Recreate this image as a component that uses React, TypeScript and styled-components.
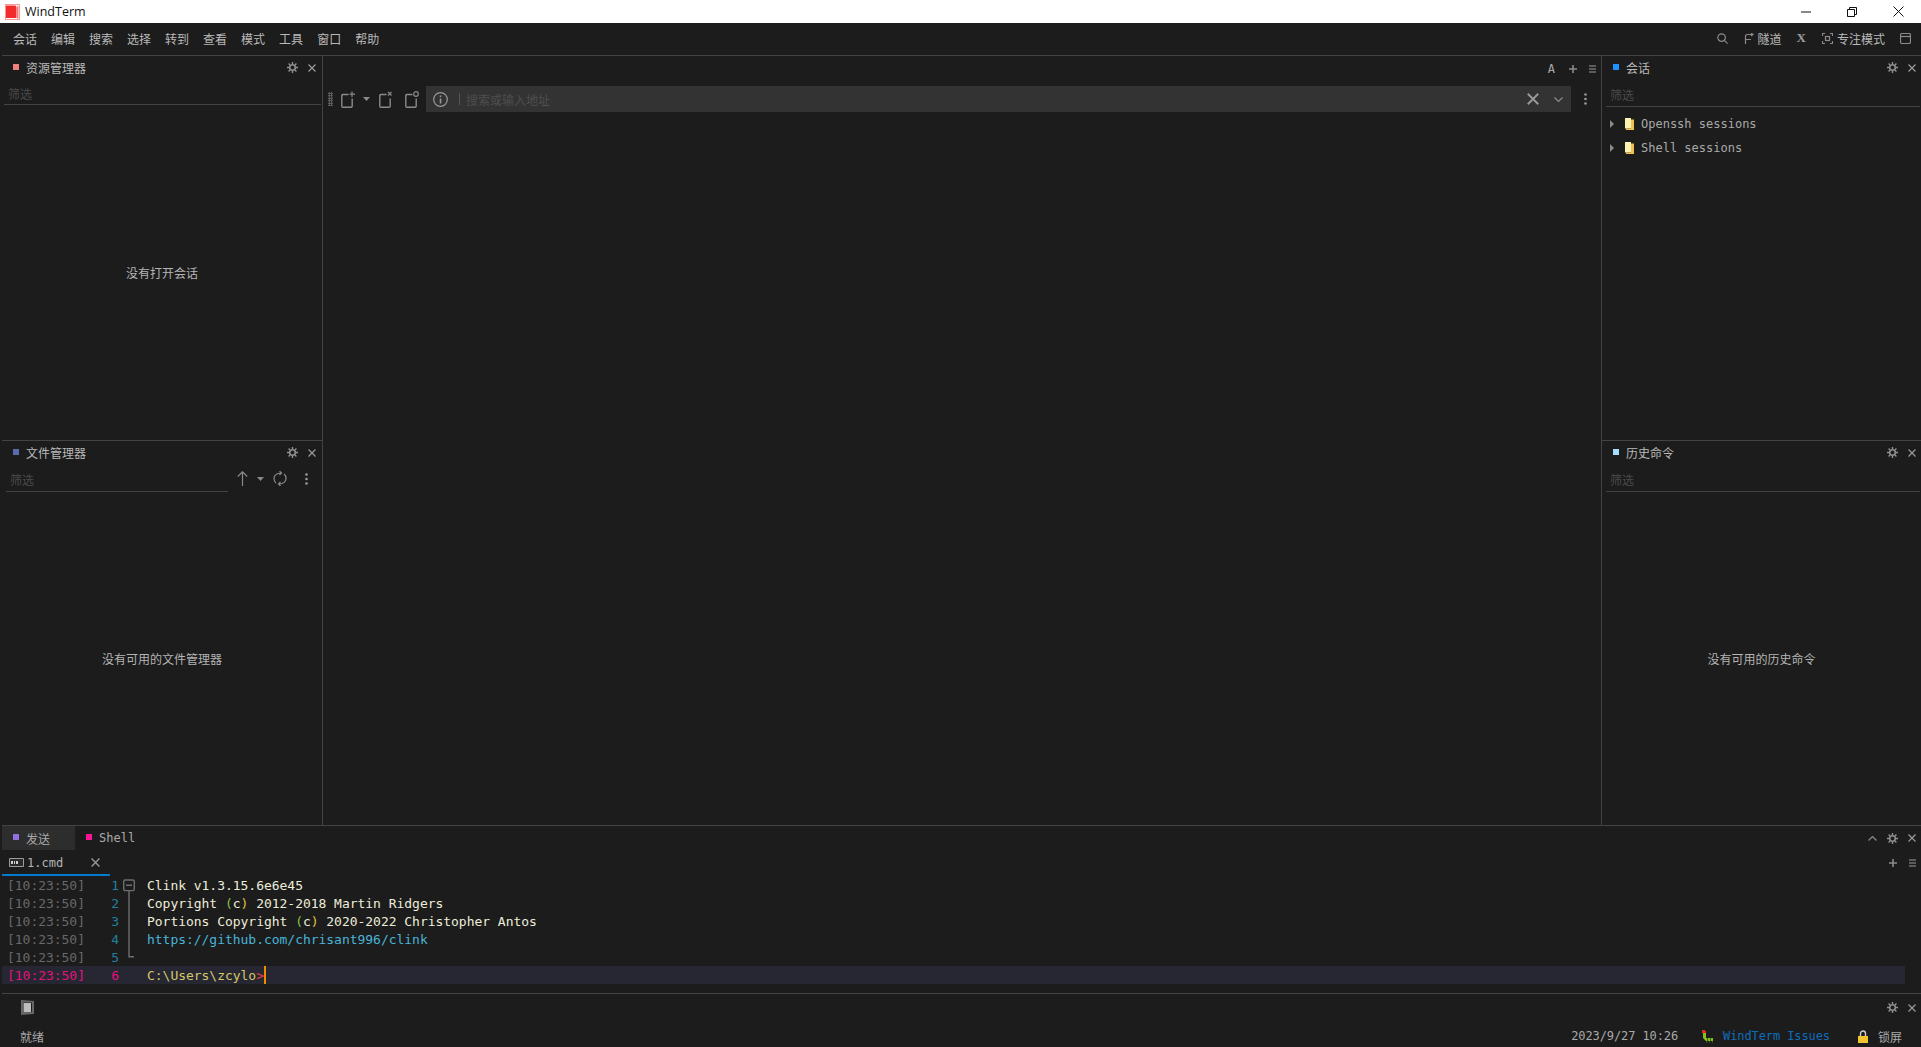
import styled, { createGlobalStyle } from "styled-components";

const GlobalStyle = createGlobalStyle`
  html, body {
    margin: 0;
    padding: 0;
    height: 100%;
    background: #1c1c1c;
    overflow: hidden;
  }
  #root {
    height: 100%;
  }
  * {
    box-sizing: border-box;
  }
`;

const uiFont = `"Noto Sans CJK SC", "Noto Sans", sans-serif`;
const monoFont = `"DejaVu Sans Mono", "Liberation Mono", monospace`;
const line = "#434343";

const Page = styled.div`
  width: 1921px;
  height: 1047px;
  display: flex;
  flex-direction: column;
  background: #1c1c1c;
  color: #b4b4b4;
  font-family: ${uiFont};
  font-size: 12px;
`;

const TitleBar = styled.div`
  height: 23px;
  flex: none;
  background: #fff;
  display: flex;
  align-items: center;
  padding-left: 5px;
  color: #111;
  font-family: "Open Sans", "Noto Sans", sans-serif;
  font-size: 12.5px;
`;

const AppName = styled.span`
  margin-left: 5px;
  flex: 1;
`;

const WinButton = styled.div`
  width: 46px;
  height: 23px;
  display: flex;
  align-items: center;
  justify-content: center;
`;

const Body = styled.div`
  flex: 1;
  display: flex;
  flex-direction: column;
  padding-left: 2px;
  background: #1c1c1c;
  min-height: 0;
`;

const Gap = styled.span<{ $w: number }>`
  flex: none;
  width: ${(p) => p.$w}px;
`;

const MenuBar = styled.div`
  height: 33px;
  flex: none;
  display: flex;
  align-items: center;
  padding: 0 10px 2px 11px;
  border-bottom: 1px solid ${line};
`;

const MenuItem = styled.span`
  margin-right: 14px;
  color: #b9b9b9;
`;

const MenuSpacer = styled.div`
  flex: 1;
`;

const MenuAction = styled.div<{ $gap: number }>`
  display: flex;
  align-items: center;
  gap: 4px;
  margin-right: ${(p) => p.$gap}px;
  color: #b9b9b9;
`;

const XGlyph = styled.span`
  font-family: "Liberation Serif", serif;
  font-weight: 700;
  font-size: 13px;
  color: #9c9c9c;
  margin-right: 1px;
`;

const Workspace = styled.div`
  height: 769px;
  flex: none;
  display: grid;
  grid-template-columns: 321px 1279px 1fr;
`;

const Column = styled.div<{ $side: "left" | "right" }>`
  display: grid;
  grid-template-rows: 385px 384px;
  ${(p) => (p.$side === "left" ? `border-right: 1px solid ${line};` : "")}
  min-height: 0;
`;

const Center = styled.div`
  display: flex;
  flex-direction: column;
  border-right: 1px solid ${line};
`;

const Panel = styled.section<{ $divided?: boolean }>`
  display: flex;
  flex-direction: column;
  min-height: 0;
  ${(p) => (p.$divided ? `border-bottom: 1px solid ${line};` : "")}
`;

const PanelHeader = styled.div<{ $right?: number }>`
  height: 24px;
  flex: none;
  display: flex;
  align-items: center;
  padding: 0 ${(p) => p.$right ?? 5}px 1px 11px;
`;

const Marker = styled.i<{ $color: string }>`
  width: 6px;
  height: 6px;
  flex: none;
  margin-right: 7px;
  margin-top: -2px;
  background: ${(p) => p.$color};
`;

const PanelTitle = styled.span`
  flex: 1;
  color: #b9b9b9;
`;

const HeaderIcons = styled.div`
  display: flex;
  align-items: center;
  gap: 10px;
`;

const SessionIcons = styled(HeaderIcons)`
  gap: 12px;
`;

const FilterRow = styled.div<{ $indent: number; $tall?: boolean; $width?: number }>`
  height: ${(p) => (p.$tall ? 27 : 25)}px;
  flex: none;
  ${(p) => (p.$width ? `width: ${p.$width}px;` : "")}
  display: flex;
  align-items: center;
  margin: 0 1px 0 ${(p) => p.$indent}px;
  border-bottom: 1px solid ${line};
  padding: 2px 0 0 4px;
  color: #4a4a4a;
`;

const FileFilterBar = styled.div`
  display: flex;
  flex: none;
  align-items: center;
  height: 27px;
`;

const FileTools = styled.div`
  display: flex;
  align-items: center;
  margin-left: 8px;
`;

const Empty = styled.div`
  flex: 1;
  display: flex;
  align-items: center;
  justify-content: center;
  color: #b4b4b4;
`;

const Tree = styled.div`
  padding-top: 5px;
`;

const TreeRow = styled.div`
  height: 24px;
  display: flex;
  align-items: center;
  padding-left: 8px;
  color: #a9a9a9;
  font-family: ${monoFont};
`;

const CenterTop = styled.div`
  height: 30px;
  flex: none;
  display: flex;
  align-items: center;
  justify-content: flex-end;
  gap: 12px;
  padding: 0 5px 4px 0;
  color: #a8a8a8;
`;

const FontGlyph = styled.span`
  font-family: ${monoFont};
  font-size: 12px;
  margin-right: 2px;
  color: #a8a8a8;
`;

const Toolbar = styled.div`
  height: 26px;
  flex: none;
  display: flex;
  align-items: center;
  padding-left: 5px;
`;

const Grip = styled.div`
  width: 5px;
  height: 14px;
  margin-right: 8px;
  background-image: radial-gradient(#6a6a6a 60%, transparent 65%);
  background-size: 2.5px 2.5px;
`;

const AddressBox = styled.div`
  width: 1145px;
  height: 26px;
  margin-left: 7px;
  display: flex;
  align-items: center;
  background: #333333;
  padding-left: 7px;
`;

const AddressSep = styled.i`
  width: 1px;
  height: 12px;
  margin: 0 6px 0 11px;
  background: #555;
`;

const AddressText = styled.span`
  flex: 1;
  color: #4e4e4e;
`;

const Dock = styled.div`
  flex: 1;
  display: flex;
  flex-direction: column;
  border-top: 1px solid ${line};
  min-height: 0;
`;

const DockTabs = styled.div`
  height: 24px;
  flex: none;
  display: flex;
  align-items: stretch;
  padding-right: 5px;
`;

const DockTab = styled.div<{ $active?: boolean; $mono?: boolean }>`
  display: flex;
  align-items: center;
  width: 73px;
  padding-left: 11px;
  background: ${(p) => (p.$active ? "#2d2d2d" : "transparent")};
  color: #a9a9a9;
  ${(p) => (p.$mono ? `font-family: ${monoFont};` : "")}
`;

const TabsFill = styled.div`
  flex: 1;
`;

const SessionTabs = styled.div`
  height: 26px;
  flex: none;
  display: flex;
  align-items: center;
  padding-right: 5px;
`;

const SessionTab = styled.div`
  width: 108px;
  height: 26px;
  display: flex;
  align-items: center;
  padding: 1px 10px 0 7px;
  border-bottom: 2px solid #007acc;
  color: #b4b4b4;
  font-family: ${monoFont};
`;

const SessionName = styled.span`
  flex: 1;
  margin-left: 3px;
`;

const Terminal = styled.div`
  height: 117px;
  flex: none;
  padding-right: 16px;
  font-family: ${monoFont};
  font-size: 13px;
  letter-spacing: -0.03px;
`;

const TermLine = styled.div<{ $current?: boolean }>`
  height: 18px;
  display: flex;
  align-items: center;
  white-space: pre;
  background: ${(p) => (p.$current ? "#272733" : "transparent")};
`;

const Stamp = styled.span<{ $current?: boolean }>`
  width: 78px;
  margin-left: 5px;
  color: ${(p) => (p.$current ? "#e3127c" : "#686868")};
`;

const LineNo = styled.span<{ $current?: boolean }>`
  width: 34px;
  text-align: right;
  color: ${(p) => (p.$current ? "#e3127c" : "#22809f")};
`;

const FoldCell = styled.span`
  width: 28px;
  height: 18px;
  padding-left: 4px;
  display: block;
`;

const Code = styled.span<{ $color: string }>`
  color: ${(p) => p.$color};
`;

const Caret = styled.i`
  width: 2px;
  height: 18px;
  background: #f08c00;
`;

const Footer = styled.div`
  flex: 1;
  display: flex;
  flex-direction: column;
  border-top: 1px solid ${line};
`;

const FooterTools = styled.div`
  height: 27px;
  flex: none;
  display: flex;
  align-items: center;
  justify-content: space-between;
  padding: 0 5px 0 19px;
`;

const StatusBar = styled.div`
  flex: 1;
  display: flex;
  align-items: center;
  padding: 4px 19px 0 18px;
  color: #a9a9a9;
`;

const StatusText = styled.span`
  flex: 1;
  color: #a9a9a9;
`;

const StatusClock = styled.span`
  font-family: ${monoFont};
  letter-spacing: -0.1px;
  color: #a9a9a9;
  margin-right: 23px;
`;

const IssuesLink = styled.span`
  margin: 0 28px 0 9px;
  font-family: ${monoFont};
  letter-spacing: -0.1px;
  color: #0f6cbd;
`;

const LockLabel = styled.span`
  margin-left: 10px;
`;

const Stroke = styled.svg<{ $color?: string; $width?: number }>`
  flex: none;
  display: block;
  fill: none;
  stroke: ${(p) => p.$color || "#8a8a8a"};
  stroke-width: ${(p) => p.$width || 1.2};
`;

const TreeTri = styled.svg`
  flex: none;
  fill: #8a8a8a;
  margin-right: 11px;
`;

const TreeFolder = styled.svg`
  flex: none;
  margin-right: 7px;
`;

function Gear() {
  return (
    <Stroke width="11" height="11" viewBox="0 0 11 11" $color="#8f8f8f">
      <circle cx="5.5" cy="5.5" r="2.8" strokeWidth="1.6" />
      <path d="M5.5 0v2M5.5 9v2M0 5.5h2M9 5.5h2M1.6 1.6l1.4 1.4M8 8l1.4 1.4M9.4 1.6L8 3M3 8L1.6 9.4" strokeWidth="1.4" />
    </Stroke>
  );
}

function Close({ size = 8 }: { size?: number }) {
  return (
    <Stroke width={size} height={size} viewBox="0 0 8 8" $color="#9a9a9a">
      <path d="M0.5 0.5l7 7M7.5 0.5l-7 7" />
    </Stroke>
  );
}

function Plus() {
  return (
    <Stroke width="8" height="8" viewBox="0 0 8 8" $color="#8a8a8a">
      <path d="M4 0v8M0 4h8" strokeWidth="1.6" />
    </Stroke>
  );
}

function Lines() {
  return (
    <Stroke width="7" height="8" viewBox="0 0 7 8" $color="#9a9a9a">
      <path d="M0 1h7M0 4h7M0 7h7" strokeWidth="1.1" />
    </Stroke>
  );
}

function Dots() {
  return (
    <svg width="3" height="12" viewBox="0 0 3 12" fill="#9a9a9a">
      <circle cx="1.5" cy="1.5" r="1.3" />
      <circle cx="1.5" cy="6" r="1.3" />
      <circle cx="1.5" cy="10.5" r="1.3" />
    </svg>
  );
}

function DropCaret() {
  return (
    <svg width="7" height="4" viewBox="0 0 7 4" fill="#8a8a8a">
      <path d="M0 0h7L3.5 4z" />
    </svg>
  );
}

function Session({ mark }: { mark: "plus" | "x" | "o" }) {
  return (
    <Stroke width="14" height="17" viewBox="0 0 14 17" $color="#8a8a8a" $width={1.4}>
      <path d="M7.5 3.500H2Q0.800 3.500 0.800 4.700V15q0 1.200 1.200 1.200h8q1.200 0 1.200-1.200V7.500" />
      {mark === "plus" && <path d="M11 0.500v5.500M8.500 3.200h5.500" strokeWidth="1.2" />}
      {mark === "x" && <path d="M9 1l3.500 3.500M12.500 1L9 4.500" strokeWidth="1.2" />}
      {mark === "o" && <circle cx="11" cy="3" r="2.300" strokeWidth="1.2" />}
    </Stroke>
  );
}

function Fold({ kind }: { kind: "box" | "bar" | "end" }) {
  return (
    <Stroke width="12" height="18" viewBox="0 0 12 18" $color="#6e6e6e" $width={1.4}>
      {kind === "box" && (
        <>
          <rect x="0.7" y="4" width="10.600" height="10.600" rx="1.500" />
          <path d="M3 9.300h6M6 14.600v3.400" />
        </>
      )}
      {kind === "bar" && <path d="M6 0v18" />}
      {kind === "end" && <path d="M6 0v8.700h5" />}
    </Stroke>
  );
}

function Folder() {
  return (
    <TreeFolder width="9" height="12" viewBox="0 0 9 12">
      <path d="M0 0h6v10.500H0z" fill="#fff3b4" />
      <path d="M6 1.500h3V12H1v-1.500h5z" fill="#efc04e" />
    </TreeFolder>
  );
}

function Tri() {
  return (
    <TreeTri width="4" height="8" viewBox="0 0 4 8">
      <path d="M0 0l4 4-4 4z" />
    </TreeTri>
  );
}

const menus = ["会话", "编辑", "搜索", "选择", "转到", "查看", "模式", "工具", "窗口", "帮助"];

const stamp = "[10:23:50]";

export default function App() {
  return (
    <Page>
      <GlobalStyle />
      <TitleBar>
        <svg width="15" height="16" viewBox="0 0 15 16">
          <path d="M0 0h15v16H0z" fill="#f59a96" />
          <path d="M1 1h13v14H1z" fill="#fff" />
          <path d="M1 1.500h9.500l1 1.500v11H1z" fill="#f22c2c" />
          <path d="M12 2.500l1.500-1V14.500H12z" fill="#f77" />
        </svg>
        <AppName>WindTerm</AppName>
        <WinButton>
          <Stroke width="10" height="10" viewBox="0 0 10 10" $color="#111" $width={1}>
            <path d="M0 5h10" />
          </Stroke>
        </WinButton>
        <WinButton>
          <Stroke width="10" height="10" viewBox="0 0 10 10" $color="#111" $width={1}>
            <path d="M0.5 2.5h7v7h-7zM2.5 2.5v-2h7v7h-2" />
          </Stroke>
        </WinButton>
        <WinButton>
          <Stroke width="11" height="11" viewBox="0 0 11 11" $color="#111" $width={1}>
            <path d="M0.5 0.5l10 10M10.500 0.500l-10 10" />
          </Stroke>
        </WinButton>
      </TitleBar>
      <Body>
        <MenuBar>
          {menus.map((m) => (
            <MenuItem key={m}>{m}</MenuItem>
          ))}
          <MenuSpacer />
          <MenuAction $gap={16}>
            <Stroke width="11" height="11" viewBox="0 0 11 11">
              <circle cx="4.6" cy="4.6" r="3.8" />
              <path d="M7.4 7.4l3.2 3.2" />
            </Stroke>
          </MenuAction>
          <MenuAction $gap={15}>
            <Stroke width="10" height="11" viewBox="0 0 10 11">
              <path d="M1.500 11V3.500Q1.500 1.500 3.500 1.500H8M7 0l2 1.500L7 3M1.500 6.500H7" />
            </Stroke>
            隧道
          </MenuAction>
          <MenuAction $gap={15}>
            <XGlyph>X</XGlyph>
          </MenuAction>
          <MenuAction $gap={15}>
            <Stroke width="11" height="11" viewBox="0 0 11 11">
              <path d="M0.500 3V0.500H3M8 0.500h2.500V3M10.500 8v2.500H8M3 10.500H0.500V8" />
              <rect x="3.500" y="3.500" width="4" height="4" />
            </Stroke>
            专注模式
          </MenuAction>
          <Stroke width="11" height="11" viewBox="0 0 11 11">
            <rect x="0.500" y="0.500" width="10" height="10" rx="1.500" />
            <path d="M0.500 3.500h10" />
          </Stroke>
        </MenuBar>
        <Workspace>
          <Column $side="left">
            <Panel $divided>
              <PanelHeader $right={6}>
                <Marker $color="#f08080" />
                <PanelTitle>资源管理器</PanelTitle>
                <HeaderIcons>
                  <Gear />
                  <Close />
                </HeaderIcons>
              </PanelHeader>
              <FilterRow $indent={2}>筛选</FilterRow>
              <Empty>没有打开会话</Empty>
            </Panel>
            <Panel>
              <PanelHeader $right={6}>
                <Marker $color="#5a6bb0" />
                <PanelTitle>文件管理器</PanelTitle>
                <HeaderIcons>
                  <Gear />
                  <Close />
                </HeaderIcons>
              </PanelHeader>
              <FileFilterBar>
                <FilterRow $indent={4} $tall $width={222}>
                  筛选
                </FilterRow>
                <FileTools>
                  <Stroke width="11" height="15" viewBox="0 0 11 15">
                    <path d="M5.500 15V1M0.800 5.500L5.500 0.800l4.700 4.700" />
                  </Stroke>
                  <Gap $w={9} />
                  <DropCaret />
                  <Gap $w={9} />
                  <Stroke width="14" height="15" viewBox="0 0 14 15">
                    <path d="M3 12Q1 10.500 1 7.500 1 4 5 2.500L7.500 2M11 3Q13 4.500 13 7.500 13 11 9 12.500L6.500 13M6.500 0l2 2-2 2M7.500 11l-2 2 2 2" />
                  </Stroke>
                  <Gap $w={18} />
                  <Dots />
                </FileTools>
              </FileFilterBar>
              <Empty>没有可用的文件管理器</Empty>
            </Panel>
          </Column>
          <Center>
            <CenterTop>
              <FontGlyph>A</FontGlyph>
              <Plus />
              <Lines />
            </CenterTop>
            <Toolbar>
              <Grip />
              <Session mark="plus" />
              <Gap $w={8} />
              <DropCaret />
              <Gap $w={9} />
              <Session mark="x" />
              <Gap $w={12} />
              <Session mark="o" />
              <AddressBox>
                <Stroke width="15" height="15" viewBox="0 0 15 15" $color="#9a9a9a">
                  <circle cx="7.5" cy="7.5" r="6.8" />
                  <path d="M7.500 6.500v5M7.500 3.500v1.500" strokeWidth="1.500" />
                </Stroke>
                <AddressSep />
                <AddressText>搜索或输入地址</AddressText>
                <Close size={12} />
                <Gap $w={15} />
                <Stroke width="9" height="5" viewBox="0 0 9 5">
                  <path d="M0.500 0.500L4.500 4.500 8.500 0.500" />
                </Stroke>
                <Gap $w={8} />
              </AddressBox>
              <Gap $w={13} />
              <Dots />
            </Toolbar>
          </Center>
          <Column $side="right">
            <Panel $divided>
              <PanelHeader>
                <Marker $color="#1e90ff" />
                <PanelTitle>会话</PanelTitle>
                <HeaderIcons>
                  <Gear />
                  <Close />
                </HeaderIcons>
              </PanelHeader>
              <FilterRow $indent={4} $tall>
                筛选
              </FilterRow>
              <Tree>
                <TreeRow>
                  <Tri />
                  <Folder />
                  Openssh sessions
                </TreeRow>
                <TreeRow>
                  <Tri />
                  <Folder />
                  Shell sessions
                </TreeRow>
              </Tree>
            </Panel>
            <Panel>
              <PanelHeader>
                <Marker $color="#a6dcff" />
                <PanelTitle>历史命令</PanelTitle>
                <HeaderIcons>
                  <Gear />
                  <Close />
                </HeaderIcons>
              </PanelHeader>
              <FilterRow $indent={4} $tall>
                筛选
              </FilterRow>
              <Empty>没有可用的历史命令</Empty>
            </Panel>
          </Column>
        </Workspace>
        <Dock>
          <DockTabs>
            <DockTab $active>
              <Marker $color="#9370db" />
              发送
            </DockTab>
            <DockTab $mono>
              <Marker $color="#ff1493" />
              Shell
            </DockTab>
            <TabsFill />
            <HeaderIcons>
              <Stroke width="9" height="5" viewBox="0 0 9 5">
                <path d="M0.500 4.500L4.500 0.500 8.500 4.500" />
              </Stroke>
              <Gear />
              <Close />
            </HeaderIcons>
          </DockTabs>
          <SessionTabs>
            <SessionTab>
              <svg width="15" height="9" viewBox="0 0 15 9">
                <path d="M0.500 0.500h14v8h-14z" fill="#2a2a2a" stroke="#9a9a9a" />
                <path d="M2 3h2v3H2zM5 3h1v3H5zM7 3h2v3H7z" fill="#cfcfcf" />
              </svg>
              <SessionName>1.cmd</SessionName>
              <Close size={9} />
            </SessionTab>
            <TabsFill />
            <SessionIcons>
              <Plus />
              <Lines />
            </SessionIcons>
          </SessionTabs>
          <Terminal>
            <TermLine>
              <Stamp>{stamp}</Stamp>
              <LineNo>1</LineNo>
              <FoldCell>
                <Fold kind="box" />
              </FoldCell>
              <Code $color="#ededda">Clink v1.3.15.6e6e45</Code>
            </TermLine>
            <TermLine>
              <Stamp>{stamp}</Stamp>
              <LineNo>2</LineNo>
              <FoldCell>
                <Fold kind="bar" />
              </FoldCell>
              <Code $color="#ededda">Copyright </Code>
              <Code $color="#8bc34a">(</Code>
              <Code $color="#ededda">c</Code>
              <Code $color="#e0c341">)</Code>
              <Code $color="#ededda"> 2012-2018 Martin Ridgers</Code>
            </TermLine>
            <TermLine>
              <Stamp>{stamp}</Stamp>
              <LineNo>3</LineNo>
              <FoldCell>
                <Fold kind="bar" />
              </FoldCell>
              <Code $color="#ededda">Portions Copyright </Code>
              <Code $color="#8bc34a">(</Code>
              <Code $color="#ededda">c</Code>
              <Code $color="#e0c341">)</Code>
              <Code $color="#ededda"> 2020-2022 Christopher Antos</Code>
            </TermLine>
            <TermLine>
              <Stamp>{stamp}</Stamp>
              <LineNo>4</LineNo>
              <FoldCell>
                <Fold kind="bar" />
              </FoldCell>
              <Code $color="#49b5d8">https://github.com/chrisant996/clink</Code>
            </TermLine>
            <TermLine>
              <Stamp>{stamp}</Stamp>
              <LineNo>5</LineNo>
              <FoldCell>
                <Fold kind="end" />
              </FoldCell>
            </TermLine>
            <TermLine $current>
              <Stamp $current>{stamp}</Stamp>
              <LineNo $current>6</LineNo>
              <FoldCell />
              <Code $color="#d6c868">C:\Users\zcylo</Code>
              <Code $color="#e8423f">{">"}</Code>
              <Caret />
            </TermLine>
          </Terminal>
          <Footer>
            <FooterTools>
              <svg width="14" height="15" viewBox="0 0 14 15">
                <path d="M0 0l13 1v13L0 15z" fill="#666" />
                <path d="M2 2.500h9v9.500H2z" fill="#1c1c1c" />
                <path d="M2.500 3h7.500v9H2.500z" fill="#bdbdbd" />
              </svg>
              <HeaderIcons>
                <Gear />
                <Close />
              </HeaderIcons>
            </FooterTools>
            <StatusBar>
              <StatusText>就绪</StatusText>
              <StatusClock>2023/9/27 10:26</StatusClock>
              <svg width="13" height="13" viewBox="0 0 13 13">
                <path d="M1 0h3v1h1v2H1z" fill="#d9301f" />
                <path d="M2 3h3v5h7v3H5L2 8z" fill="#86c01f" />
                <path d="M6 8h1v3H6zM9 8h1v3H9z" fill="#3c6a10" />
                <path d="M5 11h1v2H5zM8 11h1v2H8zM11 11h1v2h-1z" fill="#2f5a0c" />
              </svg>
              <IssuesLink>WindTerm Issues</IssuesLink>
              <svg width="10" height="13" viewBox="0 0 10 13">
                <path d="M2.500 6V3.500a2.500 2.500 0 0 1 5 0V6" fill="none" stroke="#cfcfcf" strokeWidth="1.400" />
                <path d="M0 6h10v7H0z" fill="#f4c430" />
              </svg>
              <LockLabel>锁屏</LockLabel>
            </StatusBar>
          </Footer>
        </Dock>
      </Body>
    </Page>
  );
}
